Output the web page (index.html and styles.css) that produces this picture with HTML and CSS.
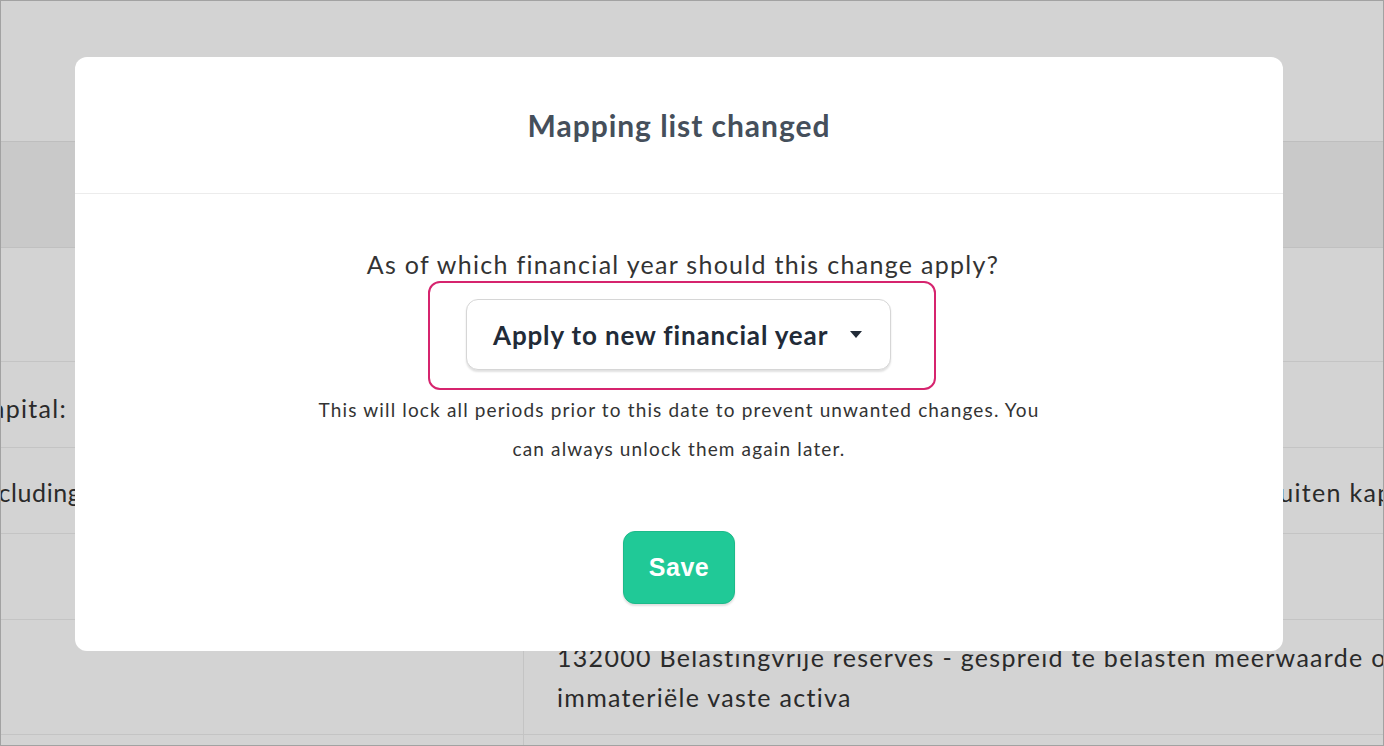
FILE: index.html
```html
<!DOCTYPE html>
<html lang="en">
<head>
<meta charset="utf-8">
<title>Mapping list changed</title>
<link rel="stylesheet" href="styles.css">
</head>
<body>
<div class="page">
  <div class="top"></div>
  <div class="table">
    <div class="row head"><div class="cell left"></div><div class="cell right"></div></div>
    <div class="row r1"><div class="cell left"></div><div class="cell right"></div></div>
    <div class="row r2"><div class="cell left"><span class="shift-a">Capital: 100000</span></div><div class="cell right"></div></div>
    <div class="row r3"><div class="cell left"><span class="shift-b">Excluding capital</span></div><div class="cell right"><span class="nowrap">130000 Onbeschikbare reserves - Uitgiftepremies andere buiten kapitaal</span></div></div>
    <div class="row r4"><div class="cell left"></div><div class="cell right"></div></div>
    <div class="row r5"><div class="cell left"></div><div class="cell right"><span>132000 Belastingvrije reserves - gespreid te belasten meerwaarde op immateriële vaste activa</span></div></div>
    <div class="row r6"><div class="cell left"></div><div class="cell right"></div></div>
  </div>
</div>

<div class="overlay">
  <div class="modal">
    <div class="modal-head">
      <h2 class="title">Mapping list changed</h2>
    </div>
    <div class="modal-body">
      <p class="question">As of which financial year should this change apply?</p>
      <div class="focus">
        <button class="select" type="button">
          <span>Apply to new financial year</span>
          <svg class="caret" width="12" height="7" viewBox="0 0 12 7"><path d="M0 0h12L6 7z" fill="#222b38"/></svg>
        </button>
      </div>
      <p class="desc">This will lock all periods prior to this date to prevent unwanted changes. You can always unlock them again later.</p>
      <button class="save" type="button">Save</button>
    </div>
  </div>
</div>
</body>
</html>
```

FILE: styles.css
```css
html, body {
  margin: 0;
  padding: 0;
  width: 1384px;
  height: 746px;
  overflow: hidden;
  font-family: "Lato", "Noto Sans", sans-serif;
  color: #333;
}

.page {
  box-sizing: border-box;
  width: 1384px;
  height: 746px;
  border: 1px solid #c4c4c4;
  background: #fff;
  overflow: hidden;
}

.top {
  height: 140px;
  border-bottom: 1px solid #e6e6e6;
}

.row {
  display: grid;
  grid-template-columns: 522px 1000px;
  border-bottom: 1px solid #ededed;
  font-size: 25px;
  letter-spacing: 1.3px;
  line-height: 40px;
}

.cell {
  display: flex;
  align-items: center;
  overflow: hidden;
}

.cell.right {
  border-left: 1px solid #ededed;
  padding: 0 32px 0 33px;
}

.head { height: 105px; background: #f3f3f3; border-bottom-color: #e9e9e9; }
.head .cell.right { border-left-color: #f3f3f3; }
.r1 { height: 113px; }
.r2 { height: 85px; }
.r3 { height: 85px; }
.r4 { height: 85px; }
.r5 { height: 114px; }
.r6 { height: 20px; }

.r2 .cell { padding-top: 6px; }
.r3 .cell { padding-top: 3px; }

.shift-a { margin-left: -27px; white-space: nowrap; }
.shift-b { margin-left: -30px; letter-spacing: 0.6px; white-space: nowrap; }
.nowrap { white-space: nowrap; }

.overlay {
  position: fixed;
  inset: 0;
  background: rgba(0, 0, 0, 0.173);
  padding: 57px 101px 0 75px;
}

.modal {
  background: #fff;
  border-radius: 12px;
}

.modal-head {
  padding: 50px 0 50px;
  border-bottom: 1px solid #ececec;
  text-align: center;
}

.title {
  margin: 0;
  font-size: 30px;
  line-height: 36px;
  font-weight: 700;
  letter-spacing: 0.95px;
  color: #454f5b;
}

.modal-body {
  padding: 55px 0 47px;
  display: flex;
  flex-direction: column;
  align-items: center;
  text-align: center;
}

.question {
  margin: 0 0 2px 8px;
  font-size: 25px;
  line-height: 30px;
  letter-spacing: 1.3px;
  color: #333;
}

.focus {
  border: 2px solid #d6246e;
  border-radius: 12px;
  padding: 16px 43px 18px 36px;
  margin-left: 6px;
}

.select {
  box-sizing: border-box;
  width: 425px;
  height: 71px;
  border: 1px solid #d6d6d6;
  border-radius: 12px;
  background: #fff;
  box-shadow: 0 2px 2px rgba(0, 0, 0, 0.12);
  padding: 0 28px 0 26px;
  display: flex;
  align-items: center;
  justify-content: space-between;
  font-family: "Lato", sans-serif;
  font-size: 26px;
  font-weight: 700;
  letter-spacing: 0.85px;
  color: #222b38;
  cursor: pointer;
}

.caret { display: block; }

.desc {
  margin: 0;
  max-width: 735px;
  font-size: 19px;
  line-height: 39px;
  letter-spacing: 1.15px;
  color: #333;
}

.save {
  margin-top: 63px;
  box-sizing: border-box;
  width: 112px;
  height: 73px;
  border: 1px solid #1dba8a;
  border-radius: 12px;
  background: #20c997;
  box-shadow: 0 2px 2px rgba(0, 0, 0, 0.12);
  color: #fff;
  font-family: "Liberation Sans", Arial, sans-serif;
  font-weight: 700;
  font-size: 25px;
  letter-spacing: 0.5px;
  cursor: pointer;
}
```
